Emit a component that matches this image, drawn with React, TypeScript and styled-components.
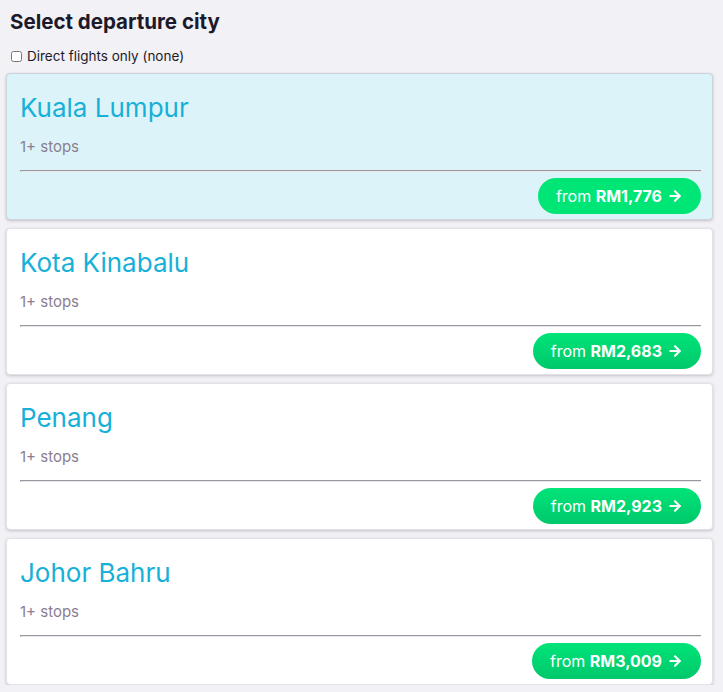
import React from 'react'
import styled, { createGlobalStyle } from 'styled-components'
import { ArrowRight } from 'lucide-react'

const GlobalStyle = createGlobalStyle`
  body {
    margin: 0;
    background: #f2f1f5;
    font-family: Inter, "Noto Sans", "Liberation Sans", sans-serif;
  }
`

interface City {
  name: string
  stops: string
  price: string
  active?: boolean
}

const cities: City[] = [
  { name: 'Kuala Lumpur', stops: '1+ stops', price: 'RM1,776', active: true },
  { name: 'Kota Kinabalu', stops: '1+ stops', price: 'RM2,683' },
  { name: 'Penang', stops: '1+ stops', price: 'RM2,923' },
  { name: 'Johor Bahru', stops: '1+ stops', price: 'RM3,009' }
]

const Page = styled.div`
  padding: 9px 10px 0 6px;
`

const Heading = styled.h1`
  margin: 0 0 0 4px;
  font-size: 20.5px;
  line-height: 26px;
  font-weight: 700;
  color: #1c1a2a;
`

const FilterRow = styled.label`
  display: flex;
  align-items: center;
  gap: 5px;
  margin: 12px 0 8px 5px;
  font-size: 13.5px;
  line-height: 18px;
  color: #1c1a2a;
`

const Check = styled.input`
  width: 11px;
  height: 11px;
  margin: 0;
  accent-color: #888;
`

const List = styled.div`
  display: flex;
  flex-direction: column;
  gap: 8px;
`

const Card = styled.div<{ $active?: boolean }>`
  display: flex;
  flex-direction: column;
  padding: 15px 11px 5px 13px;
  border-radius: 4px;
  background: ${p => (p.$active ? '#dcf4f9' : '#ffffff')};
  border: 1px solid ${p => (p.$active ? '#cbd3dc' : '#e2e1e8')};
  box-shadow: 0 1px 3px rgba(60, 50, 80, 0.25);
`

const Title = styled.h2`
  margin: 3px 0 0;
  font-size: 26px;
  line-height: 32px;
  font-weight: 400;
  color: #17b0d8;
`

const Stops = styled.div`
  margin-top: 13px;
  font-size: 15px;
  line-height: 20px;
  color: #8a7e90;
`

const Rule = styled.hr`
  width: 100%;
  margin: 13px 0 0;
  border: none;
  border-top: 1px solid #9a979e;
  border-bottom: 1px solid #e8e7ec;
  border-left: 1px solid #9a979e;
  height: 0;
  box-sizing: border-box;
`

const Footer = styled.div`
  display: flex;
  justify-content: flex-end;
  margin-top: 6px;
`

const PriceButton = styled.button<{ $active?: boolean }>`
  display: inline-flex;
  align-items: center;
  gap: 5px;
  height: 36px;
  padding: 0 18px;
  border: none;
  border-radius: 18px;
  background: ${p => (p.$active ? '#00e676' : 'linear-gradient(#00e479, #00c86b)')};
  color: #ffffff;
  font-family: inherit;
  font-size: 16px;
  cursor: pointer;

  b {
    font-weight: 700;
  }
`

export default function App(): JSX.Element {
  return (
    <Page>
      <GlobalStyle />
      <Heading>Select departure city</Heading>
      <FilterRow>
        <Check type="checkbox" />
        Direct flights only (none)
      </FilterRow>
      <List>
        {cities.map(city => (
          <Card key={city.name} $active={city.active}>
            <Title>{city.name}</Title>
            <Stops>{city.stops}</Stops>
            <Rule />
            <Footer>
              <PriceButton $active={city.active}>
                <span>
                  from <b>{city.price}</b>
                </span>
                <ArrowRight size={16} strokeWidth={3.2} />
              </PriceButton>
            </Footer>
          </Card>
        ))}
      </List>
    </Page>
  )
}
